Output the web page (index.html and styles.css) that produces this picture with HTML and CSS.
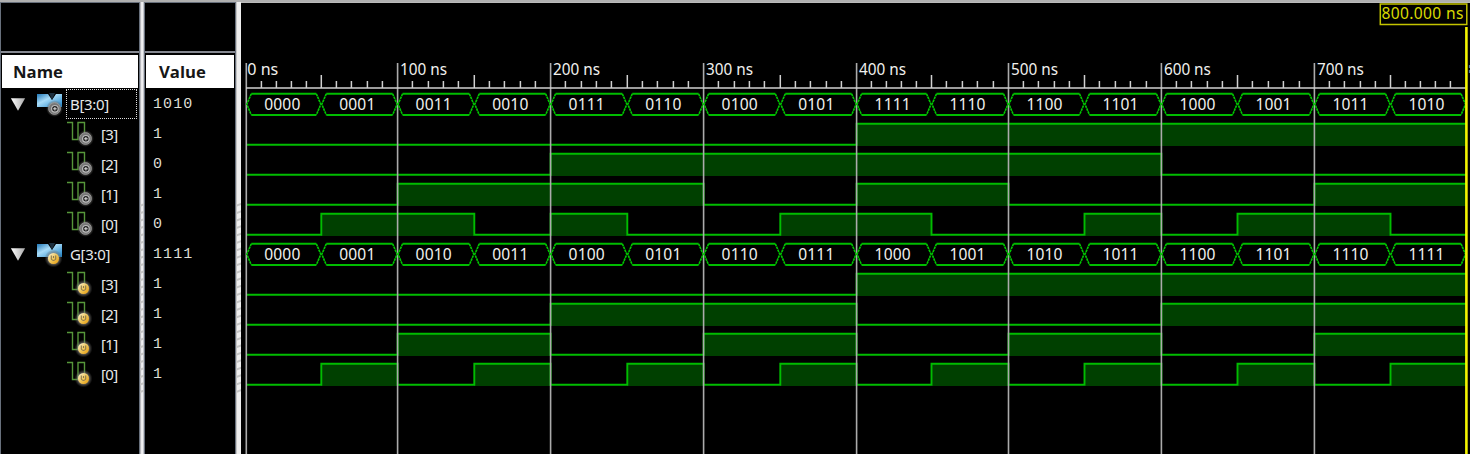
FILE: index.html
```html
<!DOCTYPE html>
<html lang="en">
<head>
<meta charset="utf-8">
<title>Waveform</title>
<link rel="stylesheet" href="styles.css">
</head>
<body>
<svg class="defs" aria-hidden="true">
  <defs>
    <linearGradient id="blue" x1="0" y1="0" x2="1" y2="1"><stop offset="0" stop-color="#2078b8"/><stop offset=".4" stop-color="#a8dcf8"/><stop offset="1" stop-color="#1880c8"/></linearGradient>
    <linearGradient id="arrowfill" x1="0" x2="1"><stop offset="0" stop-color="#fff"/><stop offset="1" stop-color="#aaa"/></linearGradient>
    <radialGradient id="glow"><stop offset=".45" stop-color="#99958a"/><stop offset="1" stop-color="#555" stop-opacity="0"/></radialGradient>
    <linearGradient id="gold" x1="0" y1="0" x2="1" y2="1"><stop offset="0" stop-color="#fff6dc"/><stop offset=".5" stop-color="#efc75c"/><stop offset="1" stop-color="#e89a08"/></linearGradient>
    <symbol id="arrow" viewBox="0 0 18 14"><path d="M1 0H17L9 14Z" fill="url(#arrowfill)"/></symbol>
    <symbol id="gear" viewBox="0 0 18 18"><circle cx="9" cy="9" r="8.5" fill="url(#glow)"/><circle cx="9" cy="9" r="5.8" fill="#777" stroke="#999"/><circle cx="9.4" cy="9.3" r="3.3" fill="#222" stroke="#bbb" stroke-width="1.2"/><path d="M9.4 7.5V11M7.6 9.3H11.2" stroke="#ddd"/></symbol>
    <symbol id="coin" viewBox="0 0 18 18"><circle cx="9" cy="9" r="9" fill="url(#glow)"/><circle cx="9" cy="9" r="5.5" fill="url(#gold)"/><path d="M6.8 6V9.5Q9 12.5 11.2 9.5V6M9 6.5V8.5" fill="none" stroke="#8a784e" stroke-width="1.1"/></symbol>
    <symbol id="bus" viewBox="0 0 26 24"><path d="M0 1H11L15 7L19 1H25V14H0Z" fill="url(#blue)"/><path d="M12 0L15 7L18 0Z" fill="#1c3040"/></symbol>
    <symbol id="bit" viewBox="0 0 26 26"><path d="M0 1.5H5.5V18.5H11V1.5H17.5V18.5" fill="none" stroke="#56963a" stroke-width="1.4"/></symbol>
  </defs>
</svg>
<main class="app">
  <section class="pane names">
    <div class="spacer"></div>
    <h2 class="heading">Name</h2>
    <div class="tree">
      <div class="row group"><svg class="arrow"><use href="#arrow"/></svg><svg class="icon"><use href="#bus" y="2" width="26" height="24"/><use href="#gear" x="8.5" y="8.5" width="18" height="18"/></svg><span class="label selected">B[3:0]</span></div>
      <div class="row"><svg class="icon"><use href="#bit" width="26" height="26"/><use href="#gear" x="9.5" y="8.5" width="18" height="18"/></svg><span class="label">[3]</span></div>
      <div class="row"><svg class="icon"><use href="#bit" width="26" height="26"/><use href="#gear" x="9.5" y="8.5" width="18" height="18"/></svg><span class="label">[2]</span></div>
      <div class="row"><svg class="icon"><use href="#bit" width="26" height="26"/><use href="#gear" x="9.5" y="8.5" width="18" height="18"/></svg><span class="label">[1]</span></div>
      <div class="row"><svg class="icon"><use href="#bit" width="26" height="26"/><use href="#gear" x="9.5" y="8.5" width="18" height="18"/></svg><span class="label">[0]</span></div>
      <div class="row group"><svg class="arrow"><use href="#arrow"/></svg><svg class="icon"><use href="#bus" y="2" width="26" height="24"/><use href="#coin" x="7.5" y="8.5" width="18" height="18"/></svg><span class="label">G[3:0]</span></div>
      <div class="row"><svg class="icon"><use href="#bit" width="26" height="26"/><use href="#coin" x="7.5" y="8.5" width="18" height="18"/></svg><span class="label">[3]</span></div>
      <div class="row"><svg class="icon"><use href="#bit" width="26" height="26"/><use href="#coin" x="7.5" y="8.5" width="18" height="18"/></svg><span class="label">[2]</span></div>
      <div class="row"><svg class="icon"><use href="#bit" width="26" height="26"/><use href="#coin" x="7.5" y="8.5" width="18" height="18"/></svg><span class="label">[1]</span></div>
      <div class="row"><svg class="icon"><use href="#bit" width="26" height="26"/><use href="#coin" x="7.5" y="8.5" width="18" height="18"/></svg><span class="label">[0]</span></div>
    </div>
  </section>
  <div class="splitter"></div>
  <section class="pane values">
    <div class="spacer"></div>
    <h2 class="heading">Value</h2>
    <div class="tree">
      <div class="row">1010</div><div class="row">1</div><div class="row">0</div><div class="row">1</div><div class="row">0</div>
      <div class="row">1111</div><div class="row">1</div><div class="row">1</div><div class="row">1</div><div class="row">1</div>
    </div>
  </section>
  <div class="splitter wide"></div>
  <section class="waves"><svg id="waves" class="plot" viewBox="241 3 1229 451"></svg></section>
</main>
<script src="waves.js"></script>
</body>
</html>
```
FILE: styles.css
```css
* { box-sizing: border-box; }
body { margin: 0; background: #000; color: #e8e8e8; font-family: "Noto Sans", "Open Sans", sans-serif; overflow: hidden; }
.defs { position: absolute; width: 0; height: 0; }
.app { display: flex; width: 1470px; height: 454px; border-top: 2px solid #b0b0b0; }
.pane { border: 1px solid #68707c; border-bottom: 0; display: flex; flex-direction: column; flex: none; }
.names { width: 140px; }
.values { width: 92px; }
.spacer { height: 50px; border-bottom: 2px solid #858891; flex: none; }
.heading { margin: 2px 1px 0; height: 33px; background: #fff; color: #161616; font: bold 16.7px/33px "Open Sans", "Noto Sans", sans-serif; padding-left: 11px; flex: none; }
.values .heading { padding-left: 13px; }
.tree { padding-top: 1px; }
.row { height: 30px; display: flex; align-items: center; padding-left: 66px; }
.group { padding-left: 9px; }
.arrow { width: 16px; height: 13px; margin-right: 11px; flex: none; }
.icon { width: 26px; height: 26px; flex: none; overflow: visible; }
.label { font-size: 15px; line-height: 28px; margin-left: 8px; letter-spacing: -.6px; }
.group .label { width: 71px; height: 30px; padding-left: 3px; margin-left: 3px; border: 1px dotted transparent; flex: none; line-height: 28px; letter-spacing: -.3px; }
.group .selected { border-color: #ddd; }
.values .row { padding-left: 8px; font: 15px/30px "Liberation Mono", monospace; letter-spacing: 1.1px; color: #deded4; padding-top: 2px; }
.splitter { width: 4px; flex: none; background: linear-gradient(90deg, #a0a0a6, #efeff1 40%, #efeff1 75%, #999ca5); }
.wide { width: 5px; background: linear-gradient(90deg, #aaa, #eee 25%, #eee); }
.splitter::after { content: ""; display: block; height: 192px; margin-top: 199px; background: repeating-linear-gradient(160deg, transparent 0 3px, #c4c4c4 4px 5px, transparent 6px 7px); }
.waves { flex: none; width: 1229px; border-top: 1px solid #bbb; }
.plot { display: block; width: 1229px; height: 451px; }
.plot text { font-family: "Noto Sans", "Open Sans", sans-serif; font-size: 15.6px; fill: #f0f0ee; }
.grid { stroke: #ababab; stroke-width: 1.6; }
.tick { stroke: #d0d0d0; stroke-width: 1.5; }
.line { stroke: #00bc00; stroke-width: 1.9; fill: none; }
.diagonal { stroke: #00c800; stroke-width: 1.6; stroke-dasharray: 2.6 .6; fill: none; }
.fill { fill: #004000; shape-rendering: crispEdges; }
.cursor { stroke: #f5f500; stroke-width: 2.6; }
.badge { fill: #000; stroke: #c4c400; stroke-width: 1.5; }
.sliver { stroke: #4a6fa0; stroke-width: 1.2; stroke-dasharray: 3 2; }
.plot .cursor-text { fill: #dada00; }
```
FILE: waves.js
```js
const svg = document.getElementById("waves");
const xs = [246.3, 321.3, 397.6, 474.3, 550.6, 627.3, 703.6, 780.3, 856.6, 931.5, 1008.5, 1084.5, 1161.4, 1237.5, 1314.4, 1390.5, 1466];
const buses = [
  { y: 104, values: "0000 0001 0011 0010 0111 0110 0100 0101 1111 1110 1100 1101 1000 1001 1011 1010".split(" ") },
  { y: 254, values: "0000 0001 0010 0011 0100 0101 0110 0111 1000 1001 1010 1011 1100 1101 1110 1111".split(" ") }
];

function add(name, attrs, text) {
  const el = document.createElementNS("http://www.w3.org/2000/svg", name);
  for (const key in attrs) el.setAttribute(key, attrs[key]);
  if (text) el.textContent = text;
  svg.appendChild(el);
}
function path(cls, d) { add("path", { class: cls, d }); }

for (const bus of buses) {
  for (let bit = 0; bit < 4; bit++) {
    const y = bus.y + 30 * (bit + 1), hi = y - 10.3, lo = y + 10.7;
    let d = "";
    bus.values.forEach((v, i) => {
      const on = v[bit] === "1", level = on ? hi : lo;
      if (on) add("rect", { class: "fill", x: xs[i], y: hi, width: xs[i + 1] - xs[i], height: 22 });
      d += (i ? "L" : "M") + xs[i] + " " + level + "L" + xs[i + 1] + " " + level;
    });
    path("line", d);
  }
}

for (let i = 0; i < 16; i += 2) path("grid", `M${xs[i]} 63V454`);

for (const bus of buses) {
  bus.values.forEach((v, i) => {
    const a = xs[i], b = xs[i + 1], t = bus.y - 10.3, m = bus.y + .3, l = bus.y + 11;
    path("line", `M${a + 5} ${t}H${b - 5}M${a + 5} ${l}H${b - 5}`);
    path("diagonal", `M${a + 5} ${t}L${a + .5} ${m}L${a + 5} ${l}M${b - 5} ${t}L${b - .5} ${m}L${b - 5} ${l}`);
    add("text", { x: a + 18, y: bus.y + 5.5, textLength: 36, lengthAdjust: "spacing" }, v);
  });
}
path("tick", "M246 88H1466");
for (let i = 0; i < 16; i++) {
  for (let j = 1; j < 5; j++) path("tick", `M${Math.floor(xs[i] + (xs[i + 1] - xs[i]) * j / 5) + .4} 81V88`);
  if (i % 2) path("tick", `M${xs[i]} 75V88`);
  else add("text", { x: xs[i] + (i ? 2.5 : 1), y: 75, textLength: i ? 47 : 31, lengthAdjust: "spacingAndGlyphs" }, `${i * 50} ns`);
}
path("sliver", "M1469.5 65V74");
path("cursor", "M1466.4 27V454");
add("rect", { class: "badge", x: 1380.3, y: 4, width: 86.5, height: 20.5 });
add("text", { class: "cursor-text", x: 1381.5, y: 19.3, textLength: 82, lengthAdjust: "spacing" }, "800.000 ns");
```
